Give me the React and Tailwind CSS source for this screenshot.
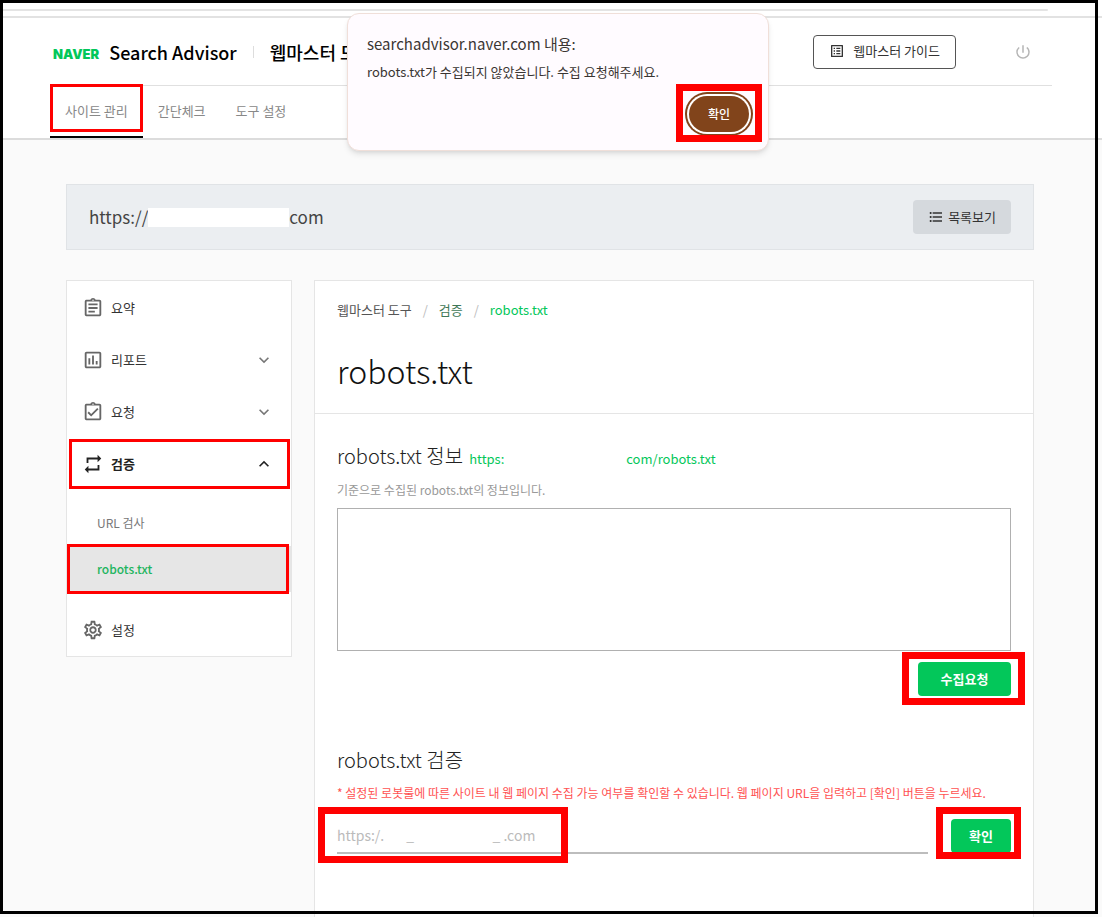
import React, { useState } from "react";
import {
  MdOutlineAssignment,
  MdOutlineAssessment,
  MdOutlineAssignmentTurnedIn,
  MdRepeat,
  MdOutlineSettings,
  MdKeyboardArrowDown,
  MdKeyboardArrowUp,
  MdListAlt,
  MdFormatListBulleted,
  MdPowerSettingsNew,
} from "react-icons/md";

const TABS = ["사이트 관리", "간단체크", "도구 설정"];

/* Red frame that highlights the element it is placed in */
function Mark({ className }) {
  return <span aria-hidden="true" className={`absolute z-10 pointer-events-none border-[#ff0000] ${className}`} />;
}

function Header() {
  return (
    <header className="bg-white border-b-2 border-[#dcdcdc]">
      {/* BROWSER STRIP */}
      <div className="h-[18px] pt-[9px] border-b-2 border-[#e2e2e2]">
        <div className="h-[2px] mr-[54px] rounded-r-full bg-[#e4e4e4]" />
      </div>

      <div className="px-[50px]">
        {/* LOGO ROW */}
        <div className="h-[68px] flex items-center justify-between border-b border-[#e0e0e0]">
          <div className="flex items-center pl-[3px] text-black whitespace-nowrap">
            <a href="#" className="mr-[10px] pt-[6px] text-[13px] leading-none font-black text-[#03c75a] font-['Inter',sans-serif]">NAVER</a>
            <a href="#" className="text-[18px] leading-7 font-medium">Search Advisor</a>
            <span className="w-px h-3 mx-4 bg-[#dddddd]" />
            <a href="#" className="text-[18px] leading-7 font-medium">웹마스터 도구</a>
          </div>
          <div className="flex items-center pr-5">
            <a href="#" className="h-[34px] mr-[58px] px-[15px] pb-px flex items-center gap-2 rounded border border-[#555555] text-[13px] text-[#333333]">
              <MdListAlt size={16} />
              웹마스터 가이드
            </a>
            <button type="button" aria-label="로그아웃" className="text-[#b5b5b5]">
              <MdPowerSettingsNew size={18} />
            </button>
          </div>
        </div>

        {/* TABS */}
        <nav className="h-[52px] flex text-[13px] text-[#888888]">
          {TABS.map((tab, i) => (
            <a key={tab} href="#" className={`relative flex items-center px-[15px] ${i === 0 ? "border-b-2 border-black" : "pb-[2px]"}`}>
              {tab}
              {i === 0 && <Mark className="-top-[2px] inset-x-0 h-[48px] border-3" />}
            </a>
          ))}
        </nav>
      </div>
    </header>
  );
}

function AlertDialog({ onClose }) {
  return (
    <div role="alertdialog" aria-labelledby="alert-title" aria-describedby="alert-text" className="absolute z-30 top-[13px] left-1/2 ml-[7px] -translate-x-1/2 w-[422px] rounded-xl border border-[#f0dfd9] bg-[#fffbff] shadow-md px-[19px] pt-[18px] pb-[18px] text-[#3a3532]">
      <h2 id="alert-title" className="text-[15px] leading-6">searchadvisor.naver.com 내용:</h2>
      <p id="alert-text" className="mt-[6px] text-[13px] leading-5">robots.txt가 수집되지 않았습니다. 수집 요청해주세요.</p>
      <div className="mt-[14px] flex justify-end">
        <button type="button" onClick={onClose} className="relative w-[60px] h-[36px] rounded-full bg-[#81441b] text-[12px] font-medium text-white ring-2 ring-[#81441b] ring-offset-2 ring-offset-white">
          확인
          <Mark className="-inset-x-[13px] -top-[12px] -bottom-[10px] border-[7px]" />
        </button>
      </div>
    </div>
  );
}

function SideItem({ icon: Icon, label, arrow: Arrow, active }) {
  return (
    <button type="button" className={`relative w-full h-[52px] pl-[15px] pr-[17px] flex items-center text-left text-[13px] ${active ? "font-bold text-[#222222]" : "text-[#333333]"}`}>
      <Icon size={22} className={active ? "text-[#222222]" : "text-[#666666]"} />
      <span className="ml-[7px] pb-px flex-1">{label}</span>
      {Arrow && <Arrow size={20} className={active ? "text-[#222222]" : "text-[#777777]"} />}
      {active && <Mark className="left-[2px] right-[1px] inset-y-[1px] border-3" />}
    </button>
  );
}

function Sidebar() {
  return (
    <aside className="w-[226px] shrink-0 self-start pt-px bg-white border border-[#e5e5e5]">
      <SideItem icon={MdOutlineAssignment} label="요약" />
      <SideItem icon={MdOutlineAssessment} label="리포트" arrow={MdKeyboardArrowDown} />
      <SideItem icon={MdOutlineAssignmentTurnedIn} label="요청" arrow={MdKeyboardArrowDown} />
      <SideItem icon={MdRepeat} label="검증" arrow={MdKeyboardArrowUp} active />
      <div className="pt-[10px] pb-3 text-[12px]">
        <a href="#" className="h-[46px] px-[30px] flex items-center text-[#777777]">URL 검사</a>
        <a href="#" className="relative h-[46px] px-[30px] flex items-center bg-[#e6e6e6] font-medium text-[#1fb55f]">
          robots.txt
          <Mark className="left-0 right-[2px] -inset-y-[2px] border-3" />
        </a>
      </div>
      <SideItem icon={MdOutlineSettings} label="설정" />
    </aside>
  );
}

function RobotsPanel() {
  return (
    <section className="flex-1 min-w-0 bg-white border border-b-0 border-[#e5e5e5]">
      <div className="h-[133px] px-[22px] pt-[19px] border-b border-[#e5e5e5]">
        <nav className="flex items-center gap-[11px] text-[13px] leading-5 text-[#555555]">
          <a href="#">웹마스터 도구</a>
          <span className="text-[#bbbbbb]">/</span>
          <a href="#" className="text-[#3f7857]">검증</a>
          <span className="text-[#bbbbbb]">/</span>
          <a href="#" className="text-[#03c75a]">robots.txt</a>
        </nav>
        <h1 className="mt-[30px] text-[32px] leading-10 font-light text-[#111111]">robots.txt</h1>
      </div>

      <div className="px-[22px] pt-7">
        {/* COLLECTED FILE */}
        <div className="flex items-baseline gap-[6px]">
          <h2 className="text-[20px] leading-7 font-light text-[#222222]">robots.txt 정보</h2>
          <a href="#" className="flex gap-[122px] text-[13px] text-[#03c75a]">
            <span>https:</span>
            <span>com/robots.txt</span>
          </a>
        </div>
        <label htmlFor="robots" className="mt-[10px] block text-[12px] leading-5 text-[#999999]">기준으로 수집된 robots.txt의 정보입니다.</label>
        <textarea id="robots" readOnly className="mt-2 block w-full h-[143px] p-3 resize-none border border-[#b0b0b0] text-[12px] outline-none" />
        <div className="mt-[11px] flex justify-end">
          <button type="button" className="relative w-[93px] h-[34px] rounded bg-[#03c75a] text-[13px] font-bold text-white">
            수집요청
            <Mark className="-left-4 -right-[14px] -top-[10px] -bottom-[9px] border-[7px]" />
          </button>
        </div>

        {/* URL CHECK */}
        <h2 className="mt-[50px] text-[20px] leading-7 font-light text-[#222222]">robots.txt 검증</h2>
        <label htmlFor="url" className="mt-[9px] block text-[12px] leading-5 text-[#ff5252] whitespace-nowrap">
          * 설정된 로봇룰에 따른 사이트 내 웹 페이지 수집 가능 여부를 확인할 수 있습니다. 웹 페이지 URL을 입력하고 [확인] 버튼을 누르세요.
        </label>
        <form className="mt-4 flex gap-[23px]" onSubmit={(e) => e.preventDefault()}>
          <div className="relative flex-1">
            <input id="url" type="text" placeholder="https:/.       _                         _ .com" className="block w-full h-[35px] pb-[2px] border-b-2 border-[#bdbdbd] text-[14px] placeholder:text-[#bbbbbb] outline-none" />
            <Mark className="-left-[19px] w-[250px] -top-3 -bottom-[9px] border-[7px]" />
          </div>
          <button type="submit" className="relative w-[60px] h-[34px] rounded bg-[#03c75a] text-[13px] font-bold text-white">
            확인
            <Mark className="-left-[15px] -right-[10px] -top-3 -bottom-[6px] border-[7px]" />
          </button>
        </form>
      </div>
    </section>
  );
}

export default function App() {
  const [isAlertOpen, setIsAlertOpen] = useState(true);

  return (
    <div className="relative min-h-screen flex flex-col bg-[#fafafa] font-['Noto_Sans_CJK_KR',sans-serif]">
      <Header />
      {isAlertOpen && <AlertDialog onClose={() => setIsAlertOpen(false)} />}

      <main className="flex-1 flex flex-col pl-[66px] pr-[68px] pt-[44px]">
        {/* SITE BAR */}
        <div className="h-[66px] px-[22px] flex items-center justify-between border border-[#e0e3e6] bg-[#ebeef1]">
          <p className="flex items-center text-[17px] leading-6 text-[#444444]">
            https://
            <span className="w-[141px] h-[19px] bg-white" />
            com
          </p>
          <button type="button" className="h-[34px] px-[15px] flex items-center gap-1 rounded bg-[#d5d9dd] text-[13px] text-[#333333]">
            <MdFormatListBulleted size={16} />
            목록보기
          </button>
        </div>

        <div className="flex-1 mt-[30px] flex gap-[22px]">
          <Sidebar />
          <RobotsPanel />
        </div>
      </main>

      {/* PAGE FRAME */}
      <div aria-hidden="true" className="absolute z-40 pointer-events-none top-0 left-0 right-1 bottom-[3px] border-3 border-black" />
    </div>
  );
}
